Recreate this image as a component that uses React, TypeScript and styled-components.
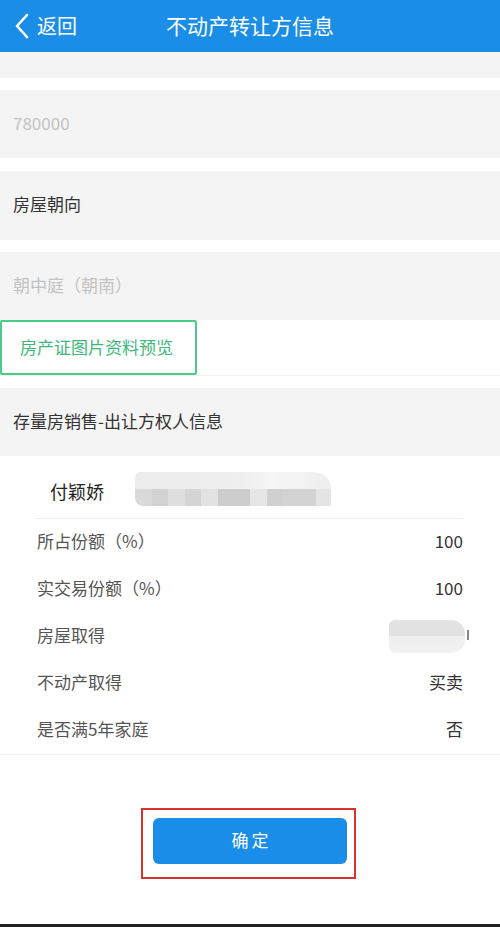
import React from "react";
import styled, { createGlobalStyle } from "styled-components";

const Global = createGlobalStyle`
  html, body { margin: 0; padding: 0; background: #ffffff; }
  body { font-family: "Noto Sans CJK SC", "Noto Sans", sans-serif; }
  * { box-sizing: border-box; }
`;

const Page = styled.div`
  width: 500px;
  height: 927px;
  display: flex;
  flex-direction: column;
  background: #fff;
  overflow: hidden;
`;

const Header = styled.header`
  height: 52px;
  flex: none;
  background: #1a8de6;
  display: grid;
  grid-template-columns: 120px 1fr 120px;
  align-items: center;
  color: #fff;
`;

const Back = styled.div`
  display: flex;
  align-items: center;
  gap: 7px;
  padding-left: 14px;
  font-size: 20px;
  line-height: 1;
`;

const Title = styled.div`
  text-align: center;
  font-size: 21px;
  line-height: 1;
  margin-top: -2px;
`;

const GreyBand = styled.div<{ $h: number; $mt?: number }>`
  height: ${(p) => p.$h}px;
  margin-top: ${(p) => p.$mt ?? 0}px;
  flex: none;
  background: #f4f4f4;
  display: flex;
  align-items: center;
  padding: 0 0 4px 13px;
`;

const FieldText = styled.span<{ $muted?: boolean }>`
  font-size: 17px;
  color: ${(p) => (p.$muted ? "#c2c2c2" : "#333")};
  line-height: 1;
`;

const PreviewRow = styled.div`
  height: 56px;
  flex: none;
  display: flex;
  border-bottom: 1px solid #f1f1f1;
`;

const PreviewBox = styled.div`
  width: 197px;
  height: 55px;
  border: 2px solid #4ccb8a;
  border-radius: 2px;
  display: flex;
  align-items: center;
  padding: 0 0 3px 18px;
  color: #3db87a;
  font-size: 17px;
`;

const NameRow = styled.div`
  height: 63px;
  flex: none;
  margin: 0 37px 0 35px;
  border-bottom: 1px solid #efefef;
  display: flex;
  align-items: center;
  padding-left: 15px;
  gap: 31px;
`;

const Name = styled.span`
  font-size: 18px;
  color: #222;
  margin-top: 7px;
`;

const NameBlur = styled.div`
  width: 196px;
  height: 34px;
  display: flex;
  flex-direction: column;
  margin-top: 3px;
`;

const BlurTop = styled.div`
  height: 17px;
  background: linear-gradient(90deg, #ececec 0%, #efefef 55%, #f6f6f6 70%, #eeeeee 100%);
  border-radius: 12px 40px 0 0;
`;

const BlurBottom = styled.div`
  height: 17px;
  display: flex;
  border-radius: 0 0 0 8px;
  overflow: hidden;
`;

const Pixel = styled.div<{ $w: number; $c: string }>`
  width: ${(p) => p.$w}px;
  background: ${(p) => p.$c};
`;

const InfoList = styled.div`
  flex: none;
  border-bottom: 1px solid #f3f3f3;
`;

const InfoRow = styled.div`
  height: 47px;
  display: flex;
  align-items: center;
  justify-content: space-between;
  padding: 0 37px 4px;
`;

const Label = styled.span`
  font-size: 17px;
  color: #555;
`;

const Value = styled.span`
  font-size: 17px;
  color: #333;
`;

const ValueBlur = styled.div`
  width: 76px;
  height: 33px;
  border-radius: 6px 14px 14px 6px;
  background: linear-gradient(180deg, #e2e2e2 0%, #e2e2e2 50%, #efefef 50%, #f2f2f2 100%);
  margin: 4px -2px 0 0;
  position: relative;
  &::after {
    content: "";
    position: absolute;
    right: -4px;
    top: 10px;
    width: 2px;
    height: 10px;
    background: #555;
    opacity: 0.7;
  }
`;

const ButtonArea = styled.div`
  flex: none;
  margin-top: 53px;
  padding-left: 141px;
`;

const RedFrame = styled.div`
  width: 215px;
  height: 71px;
  border: 2px solid #d9322e;
  padding: 8px 7px 0 10px;
`;

const ConfirmButton = styled.button`
  width: 194px;
  height: 46px;
  border: none;
  border-radius: 6px;
  background: #1a8de8;
  color: #fff;
  font-family: "Noto Sans CJK SC", sans-serif;
  font-size: 17px;
  letter-spacing: 3px;
  padding: 0 0 4px 3px;
`;

const Spacer = styled.div`
  flex: 1;
`;

const BottomLine = styled.div`
  height: 3px;
  flex: none;
  background: #222;
`;

const pixels: [number, string][] = [
  [17, "#d9d9d9"],
  [16, "#d2d2d2"],
  [17, "#dedede"],
  [16, "#d4d4d4"],
  [17, "#e2e2e2"],
  [32, "#cdcdcd"],
  [17, "#e6e6e6"],
  [16, "#d0d0d0"],
  [33, "#d3d3d3"],
  [15, "#e4e4e4"],
];

export default function App() {
  return (
    <>
      <Global />
      <Page>
        <Header>
          <Back>
            <svg width="16" height="26" viewBox="0 0 16 26">
              <polyline points="13,2 3,13 13,24" fill="none" stroke="#fff" strokeWidth="2.6" strokeLinecap="round" strokeLinejoin="round" />
            </svg>
            <span>返回</span>
          </Back>
          <Title>不动产转让方信息</Title>
          <div />
        </Header>

        <GreyBand $h={26} />
        <GreyBand $h={68} $mt={12}>
          <FieldText $muted>780000</FieldText>
        </GreyBand>
        <GreyBand $h={69} $mt={13}>
          <FieldText>房屋朝向</FieldText>
        </GreyBand>
        <GreyBand $h={68} $mt={12}>
          <FieldText $muted>朝中庭（朝南）</FieldText>
        </GreyBand>

        <PreviewRow>
          <PreviewBox>房产证图片资料预览</PreviewBox>
        </PreviewRow>

        <GreyBand $h={68} $mt={12}>
          <FieldText>存量房销售-出让方权人信息</FieldText>
        </GreyBand>

        <NameRow>
          <Name>付颖娇</Name>
          <NameBlur>
            <BlurTop />
            <BlurBottom>
              {pixels.map(([w, c], i) => (
                <Pixel key={i} $w={w} $c={c} />
              ))}
            </BlurBottom>
          </NameBlur>
        </NameRow>

        <InfoList>
          <InfoRow>
            <Label>所占份额（%）</Label>
            <Value>100</Value>
          </InfoRow>
          <InfoRow>
            <Label>实交易份额（%）</Label>
            <Value>100</Value>
          </InfoRow>
          <InfoRow>
            <Label>房屋取得</Label>
            <ValueBlur />
          </InfoRow>
          <InfoRow>
            <Label>不动产取得</Label>
            <Value>买卖</Value>
          </InfoRow>
          <InfoRow>
            <Label>是否满5年家庭</Label>
            <Value>否</Value>
          </InfoRow>
        </InfoList>

        <ButtonArea>
          <RedFrame>
            <ConfirmButton>确定</ConfirmButton>
          </RedFrame>
        </ButtonArea>
        <Spacer />
        <BottomLine />
      </Page>
    </>
  );
}
